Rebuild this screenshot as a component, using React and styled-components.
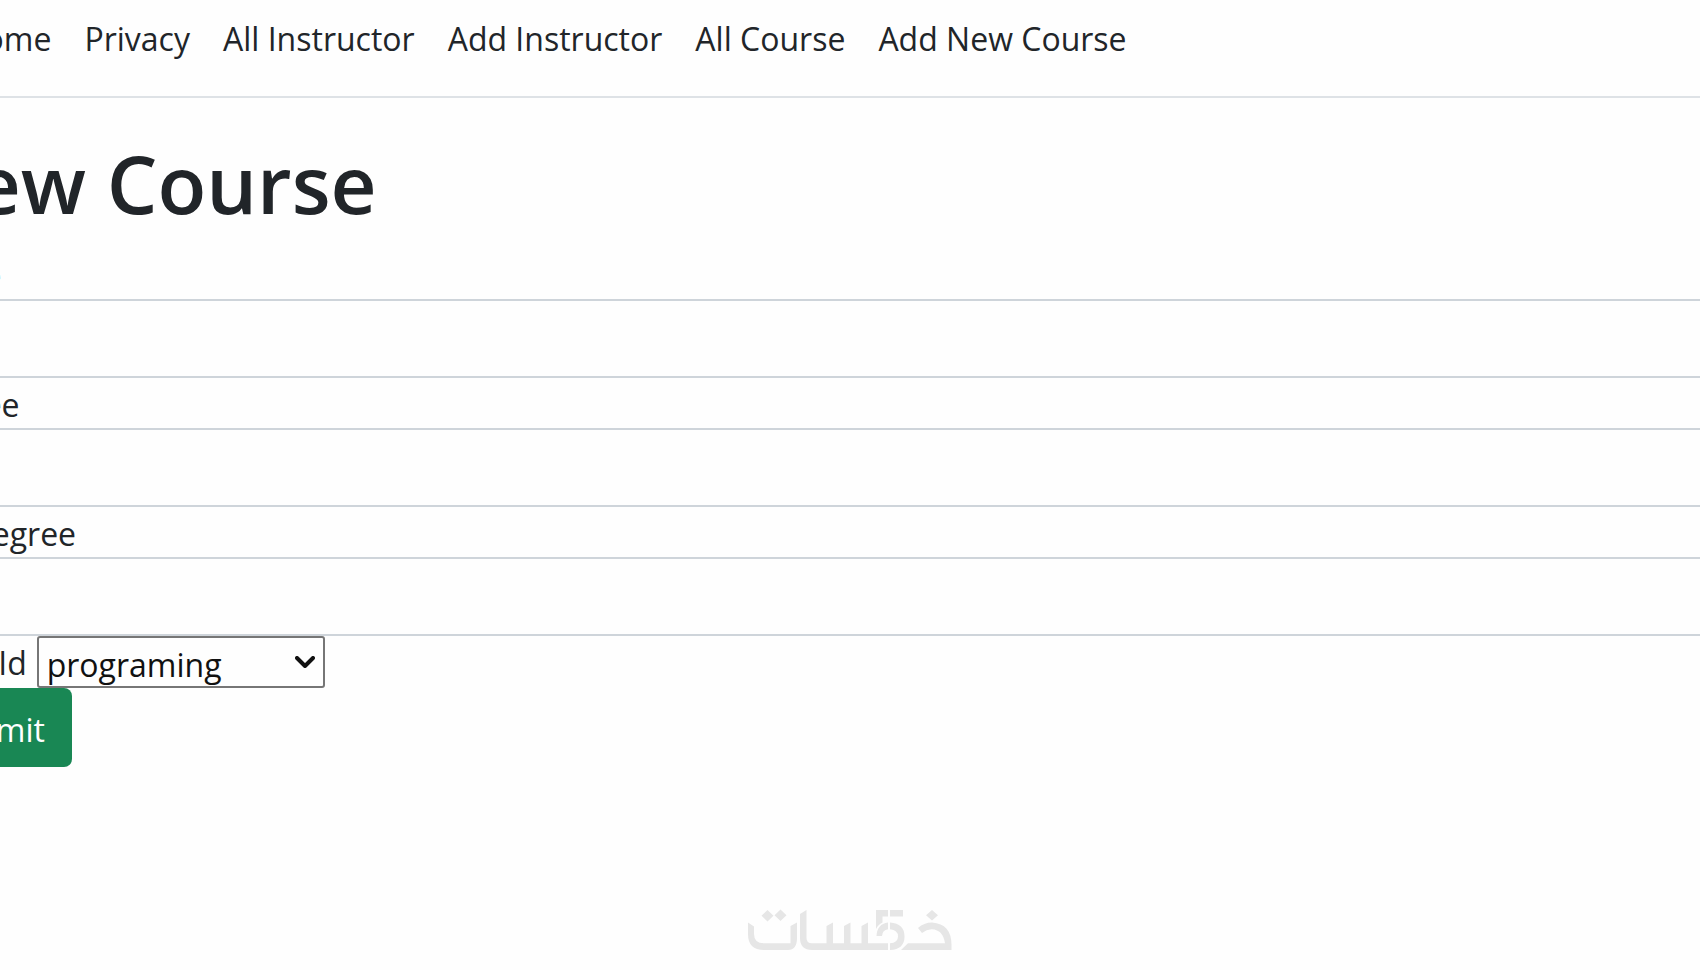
import React, { useState } from 'react';
import styled, { createGlobalStyle } from 'styled-components';

const links = ['Home', 'Privacy', 'All Instructor', 'Add Instructor', 'All Course', 'Add New Course'];

const fields = [
    { name: 'Name', type: 'text' },
    { name: 'Degree', type: 'number' },
    { name: 'MinDegree', type: 'number' },
];

const departments = ['programing', 'design', 'marketing'];

function Watermark() {
    return (
        <Logo viewBox="0 0 204 40" role="img" aria-label="خمسات">
            {/* dots */}
            <path d="M19.5 0l6 5.7-6 5.7-6-5.7zM32.5-.5l6 5.7-6 5.7-6-5.7zM184 0l6 5.3-6 5.3-6-5.3z" />
            {/* right to left: tail, bowl and stem of the five, teeth, upright, cup */}
            <path d="M170 18Q176 12.500 184 12.500Q203.500 14 203.500 35V40H153L160 33.300H197Q195 20 184 19.300Q179 19 174 23z" />
            <path d="M142 12.500Q156.500 13.500 156.500 26.500Q156.500 39.500 142 40V33.300Q150 33 150 26.500Q150 20 142 19.300z" />
            <path d="M140 12.500V19.300Q134.500 20 134 26H128.500Q129 14 140 12.500z" />
            <path d="M128 0H140V6.500H134.500V12.500Q130 14.500 128 19zM142 0H155V6.500H142z" />
            <path d="M140 40H64Q52 40 52 28V4L58.500 0V28Q58.500 33.300 64 33.300H78.500V16L85 12.500V33.300H96V16L102.500 12.500V33.300H113.500V16L120 12.500V33.300H140z" />
            <path d="M0 12.500L6 16.500V24Q6 33.300 16 33.300H42.500V16L49 12.500V28Q49 40 40 40H16Q0 40 0 24z" />
        </Logo>
    );
}

function App() {
    const [values, setValues] = useState({ Name: '', Degree: '', MinDegree: '' });
    const [department, setDepartment] = useState(departments[0]);

    const changeHandler = (e) => {
        setValues({ ...values, [e.target.name]: e.target.value });
    };

    return (
        <Page>
            <GlobalStyle />
            <Navbar>
                {links.map((link) => (
                    <NavLink key={link} href="#">{link}</NavLink>
                ))}
            </Navbar>
            <Main>
                <Title>New Course</Title>
                <form onSubmit={(e) => e.preventDefault()}>
                    {fields.map(({ name, type }) => (
                        <React.Fragment key={name}>
                            <Label htmlFor={name}>{name}</Label>
                            <Input id={name} name={name} type={type} value={values[name]} onChange={changeHandler} />
                        </React.Fragment>
                    ))}
                    <SelectRow>
                        <Label htmlFor="Dept_Id">Dept_Id</Label>
                        <SelectBox>
                            <Select id="Dept_Id" value={department} onChange={(e) => setDepartment(e.target.value)}>
                                {departments.map((item) => (
                                    <option key={item}>{item}</option>
                                ))}
                            </Select>
                            <Chevron viewBox="0 0 20 12" aria-hidden="true">
                                <path d="M2 2l8 8 8-8" />
                            </Chevron>
                        </SelectBox>
                    </SelectRow>
                    <Submit type="submit">Submit</Submit>
                </form>
            </Main>
            <Footer>
                <Watermark />
            </Footer>
        </Page>
    );
}

const GlobalStyle = createGlobalStyle`
    * {
        box-sizing: border-box;
    }

    body {
        margin: 0;
        background: #fefefe;
        color: #212529;
        font-family: "Segoe UI", "Open Sans", sans-serif;
        font-size: 32px;
        line-height: 50px;
    }
`

const Page = styled.div`
    display: flex;
    flex-direction: column;
    min-height: 100vh;
    overflow: hidden;
`

const Navbar = styled.nav`
    display: flex;
    gap: 33px;
    margin-left: -39px;
    padding: 14px 0 32px;
    border-bottom: 2px solid #dee2e6;
`

const NavLink = styled.a`
    color: #212529;
    text-decoration: none;
    white-space: nowrap;
`

const Main = styled.main`
    margin: 0 -88px;
    padding-top: 35px;
`

const Title = styled.h1`
    margin: 0 0 16px;
    font-size: 80px;
    font-weight: 600;
    line-height: 100px;
`

const Label = styled.label`
    display: block;
    padding-top: 4px;
    line-height: 46px;
`

const Input = styled.input`
    display: block;
    width: 100%;
    height: 79px;
    padding: 12px 24px;
    border: 2px solid #ced4da;
    border-radius: 8px;
    background: #fefefe;
    color: inherit;
    font: inherit;
`

const SelectRow = styled.div`
    display: flex;
    gap: 10px;
`

const SelectBox = styled.div`
    position: relative;
`

const Select = styled.select`
    display: block;
    width: 288px;
    height: 52px;
    padding: 4px 40px 0 8px;
    border: 2px solid #767676;
    border-radius: 3px;
    background: #fefefe;
    color: #111;
    font: inherit;
    line-height: 46px;
    appearance: none;
`

const Chevron = styled.svg`
    position: absolute;
    top: 20px;
    right: 10px;
    width: 20px;
    height: 12px;
    fill: none;
    stroke: #111;
    stroke-width: 4;
    stroke-linecap: round;
    stroke-linejoin: round;
    pointer-events: none;
`

const Submit = styled.button`
    display: block;
    height: 79px;
    padding: 4px 27px 0;
    border: 0;
    border-radius: 8px;
    background: #198754;
    color: white;
    font: inherit;
`

const Footer = styled.footer`
    display: flex;
    justify-content: center;
    margin-top: auto;
    padding-bottom: 20px;
`

const Logo = styled.svg`
    width: 204px;
    height: 40px;
    fill: #e6e6e6;
    overflow: visible;
`

export default App;
